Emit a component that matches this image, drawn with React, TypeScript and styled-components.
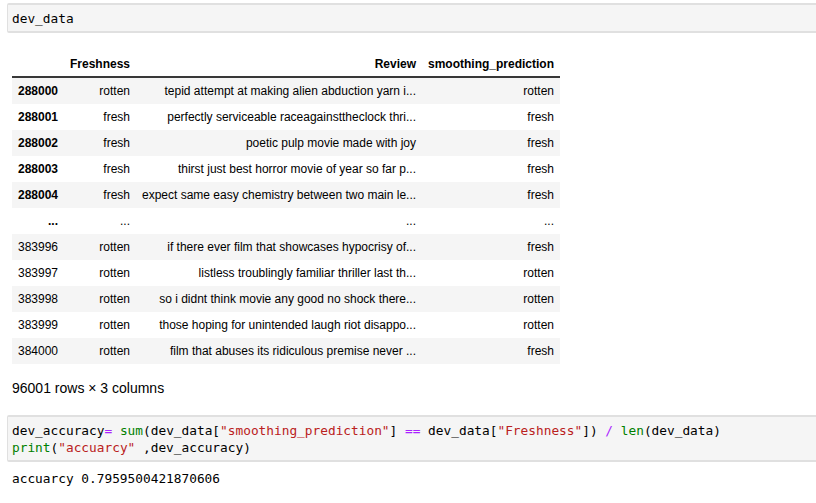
import React from "react";
import styled, { createGlobalStyle } from "styled-components";

type Row = {
  index: string;
  freshness: string;
  review: string;
  prediction: string;
  bold?: boolean;
};

const rows: Row[] = [
  { index: "288000", freshness: "rotten", review: "tepid attempt at making alien abduction yarn i...", prediction: "rotten", bold: true },
  { index: "288001", freshness: "fresh", review: "perfectly serviceable raceagainsttheclock thri...", prediction: "fresh", bold: true },
  { index: "288002", freshness: "fresh", review: "poetic pulp movie made with joy", prediction: "fresh", bold: true },
  { index: "288003", freshness: "fresh", review: "thirst just best horror movie of year so far p...", prediction: "fresh", bold: true },
  { index: "288004", freshness: "fresh", review: "expect same easy chemistry between two main le...", prediction: "fresh", bold: true },
  { index: "...", freshness: "...", review: "...", prediction: "...", bold: true },
  { index: "383996", freshness: "rotten", review: "if there ever film that showcases hypocrisy of...", prediction: "fresh" },
  { index: "383997", freshness: "rotten", review: "listless troublingly familiar thriller last th...", prediction: "rotten" },
  { index: "383998", freshness: "rotten", review: "so i didnt think movie any good no shock there...", prediction: "rotten" },
  { index: "383999", freshness: "rotten", review: "those hoping for unintended laugh riot disappo...", prediction: "rotten" },
  { index: "384000", freshness: "rotten", review: "film that abuses its ridiculous premise never ...", prediction: "fresh" },
];

const GlobalStyle = createGlobalStyle`
  html, body {
    margin: 0;
    padding: 0;
    background: #ffffff;
    overflow: hidden;
  }
`;

const Notebook = styled.div`
  width: 840px;
  padding: 3px 0 0 7px;
  display: flex;
  flex-direction: column;
`;

const CodeCell = styled.pre`
  margin: 0;
  padding: 5px 4px 4px 4px;
  background: #f5f5f5;
  border: 1px solid #e0e0e0;
  border-top-width: 2px;
  border-bottom-width: 2px;
  border-radius: 2px;
  font-family: "DejaVu Sans Mono", "Liberation Mono", monospace;
  font-size: 12.8px;
  line-height: 17px;
  color: #000;
  white-space: pre;
`;

const Output = styled.div<{ $top: number }>`
  margin-top: ${(p) => p.$top}px;
  padding-left: 5px;
`;

const Table = styled.table`
  border-collapse: collapse;
  table-layout: fixed;
  width: 548px;
  font-family: "Liberation Sans", Arial, sans-serif;
  font-size: 12px;
  color: #000;
`;

const HeadCell = styled.th`
  text-align: right;
  font-weight: bold;
  padding: 6px 6px 5px 6px;
  line-height: 14px;
  white-space: nowrap;
  border-bottom: 2px solid #383838;
`;

const BodyRow = styled.tr<{ $striped: boolean }>`
  background: ${(p) => (p.$striped ? "#f5f5f5" : "#ffffff")};
`;

const IndexCell = styled.th<{ $bold?: boolean }>`
  text-align: right;
  font-weight: ${(p) => (p.$bold ? "bold" : "normal")};
  padding: 6px;
  line-height: 14px;
  white-space: nowrap;
`;

const Cell = styled.td`
  text-align: right;
  padding: 6px;
  line-height: 14px;
  white-space: nowrap;
  overflow: hidden;
`;

const Shape = styled.div`
  font-family: "Liberation Sans", Arial, sans-serif;
  font-size: 14px;
  color: #000;
  margin-top: 16px;
`;

const Plain = styled.pre`
  margin: 0;
  font-family: "DejaVu Sans Mono", "Liberation Mono", monospace;
  font-size: 12.8px;
  line-height: 17px;
  color: #000;
`;

const Op = styled.span`
  color: #aa22ff;
`;
const Builtin = styled.span`
  color: #008000;
`;
const Str = styled.span`
  color: #ba2121;
`;

const CellGap = styled.div`
  height: 19px;
`;

export default function App() {
  return (
    <>
      <GlobalStyle />
      <Notebook>
        <CodeCell>dev_data</CodeCell>
        <Output $top={18}>
          <Table>
            <colgroup>
              <col style={{ width: 52 }} />
              <col style={{ width: 72 }} />
              <col style={{ width: 286 }} />
              <col style={{ width: 138 }} />
            </colgroup>
            <thead>
              <tr>
                <HeadCell></HeadCell>
                <HeadCell>Freshness</HeadCell>
                <HeadCell>Review</HeadCell>
                <HeadCell>smoothing_prediction</HeadCell>
              </tr>
            </thead>
            <tbody>
              {rows.map((r, i) => (
                <BodyRow key={r.index + i} $striped={i % 2 === 0}>
                  <IndexCell $bold={r.bold}>{r.index}</IndexCell>
                  <Cell>{r.freshness}</Cell>
                  <Cell>{r.review}</Cell>
                  <Cell>{r.prediction}</Cell>
                </BodyRow>
              ))}
            </tbody>
          </Table>
          <Shape>96001 rows × 3 columns</Shape>
        </Output>
        <CellGap />
        <CodeCell>
          dev_accuracy<Op>=</Op> <Builtin>sum</Builtin>(dev_data[<Str>"smoothing_prediction"</Str>] <Op>==</Op> dev_data[<Str>"Freshness"</Str>]) <Op>/</Op> <Builtin>len</Builtin>(dev_data){"\n"}
          <Builtin>print</Builtin>(<Str>"accuarcy"</Str> ,dev_accuracy)
        </CodeCell>
        <Output $top={8}>
          <Plain>accuarcy 0.7959500421870606</Plain>
        </Output>
      </Notebook>
    </>
  );
}
